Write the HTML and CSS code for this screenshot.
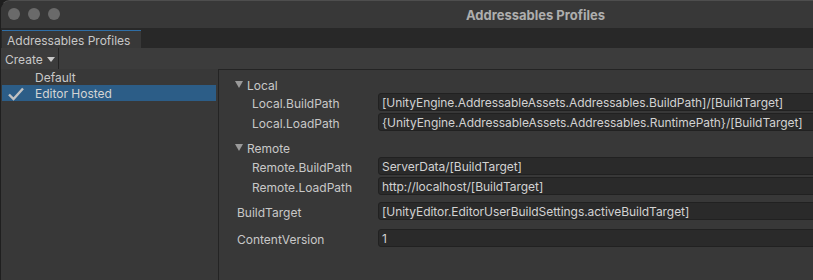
FILE: index.html
```html
<!DOCTYPE html>
<html lang="en">
<head>
    <meta charset="UTF-8">
    <title>Addressables Profiles</title>
    <link rel="stylesheet" href="styles.css">
</head>
<body>
    <div class="window">
        <div class="titlebar">
            <div class="lights"><span></span><span></span><span></span></div>
            <div class="title">Addressables Profiles</div>
        </div>

        <div class="tabstrip">
            <div class="tab">Addressables Profiles</div>
        </div>

        <div class="toolbar">
            <div class="dropdown">Create
                <svg width="8" height="5" viewBox="0 0 8 5"><path d="M0 0 L8 0 L4 5 Z" fill="#c8c8c8"/></svg>
            </div>
        </div>

        <div class="main">
            <div class="profiles">
                <div class="profile">Default</div>
                <div class="profile selected">
                    <svg class="check" width="18" height="14" viewBox="0 0 18 14">
                        <path d="M2 7.5 L6.5 12 L16 1.5" fill="none" stroke="#c2c2c2" stroke-width="2.4"/>
                    </svg>
                    Editor Hosted
                </div>
            </div>

            <div class="settings">
                <div class="group">
                    <div class="group-header"><span class="fold"></span>Local</div>
                    <div class="row nested">
                        <div class="label">Local.BuildPath</div>
                        <div class="field">[UnityEngine.AddressableAssets.Addressables.BuildPath]/[BuildTarget]</div>
                    </div>
                    <div class="row nested">
                        <div class="label">Local.LoadPath</div>
                        <div class="field">{UnityEngine.AddressableAssets.Addressables.RuntimePath}/[BuildTarget]</div>
                    </div>
                </div>

                <div class="group">
                    <div class="group-header"><span class="fold"></span>Remote</div>
                    <div class="row nested">
                        <div class="label">Remote.BuildPath</div>
                        <div class="field">ServerData/[BuildTarget]</div>
                    </div>
                    <div class="row nested">
                        <div class="label">Remote.LoadPath</div>
                        <div class="field">http://localhost/[BuildTarget]</div>
                    </div>
                </div>

                <div class="row single">
                    <div class="label">BuildTarget</div>
                    <div class="field">[UnityEditor.EditorUserBuildSettings.activeBuildTarget]</div>
                </div>
                <div class="row">
                    <div class="label">ContentVersion</div>
                    <div class="field">1</div>
                </div>
            </div>
        </div>
    </div>
</body>
</html>
```

FILE: styles.css
```css
* {
    margin: 0;
    padding: 0;
    box-sizing: border-box;
}

body {
    font-family: Inter, 'Liberation Sans', sans-serif;
    font-size: 12px;
    color: #c8c8c8;
    background: #1e1e1e;
    width: 813px;
    height: 280px;
    overflow: hidden;
}

.window {
    width: 1070px;
    height: 280px;
    background: #383838;
    border-left: 1px solid #1f1f1f;
    border-top: 1px solid #4e4e4e;
    border-radius: 10px 10px 0 0;
    display: flex;
    flex-direction: column;
    overflow: hidden;
}

.titlebar {
    height: 27px;
    position: relative;
    background: #383838;
    display: flex;
    align-items: center;
    justify-content: center;
}

.lights {
    position: absolute;
    left: 7px;
    top: 7px;
    display: flex;
    gap: 8px;
}

.lights span {
    width: 12px;
    height: 12px;
    border-radius: 50%;
    background: #6a6a6a;
}

.title {
    font-size: 13px;
    font-weight: 700;
    color: #aeaeae;
}

.tabstrip {
    height: 20px;
    background: #282828;
    padding: 2px 0 0 1px;
}

.tab {
    width: 139px;
    height: 18px;
    background: #383838;
    border-top: 1px solid #2f6ea6;
    padding-left: 5px;
    line-height: 19px;
    overflow: hidden;
    color: #c8c8c8;
}

.toolbar {
    height: 21px;
    background: #3c3c3c;
    display: flex;
}

.dropdown {
    width: 58px;
    border-right: 1px solid #242424;
    padding: 2px 0 0 4px;
    display: flex;
    align-items: center;
    gap: 4px;
}

.main {
    flex: 1;
    display: flex;
}

.profiles {
    width: 217px;
    padding: 0 2px 0 1px;
}

.profile {
    height: 16px;
    line-height: 18px;
    padding-left: 33px;
    position: relative;
    overflow: hidden;
    color: #c8c8c8;
}

.profile.selected {
    background: #2c5d87;
    color: #d4d4d4;
}

.check {
    position: absolute;
    left: 5px;
    top: 2px;
}

.settings {
    flex: 1;
    border-top: 1px solid #242424;
    border-left: 1px solid #242424;
    padding: 5px 4px 0 0;
}

.group {
    margin-bottom: 7px;
}

.group + .group .group-header {
    margin-bottom: 1px;
}

.group-header {
    height: 18px;
    display: flex;
    align-items: center;
    gap: 4px;
    padding: 2px 0 0 16px;
}

.fold {
    width: 0;
    height: 0;
    border-left: 4px solid transparent;
    border-right: 4px solid transparent;
    border-top: 7px solid #9a9a9a;
    margin-top: -2px;
}

.row {
    height: 18px;
    margin-bottom: 2px;
    display: flex;
    align-items: center;
}

.row.single {
    margin-bottom: 9px;
}

.label {
    width: 159px;
    padding: 2px 0 0 18px;
    flex-shrink: 0;
}

.nested .label {
    padding-left: 33px;
}

.field {
    flex: 1;
    height: 18px;
    line-height: 16px;
    background: #2a2a2a;
    border: 1px solid #212121;
    border-radius: 3px;
    padding: 1px 0 0 3px;
    letter-spacing: -0.05px;
    color: #d2d2d2;
    white-space: nowrap;
    overflow: hidden;
}
```
